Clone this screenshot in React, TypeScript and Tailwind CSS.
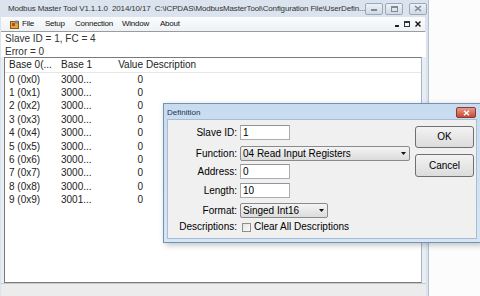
import React from "react";

const rows = [
  { a: "0 (0x0)", b: "3000...", v: "0" },
  { a: "1 (0x1)", b: "3000...", v: "0" },
  { a: "2 (0x2)", b: "3000...", v: "0" },
  { a: "3 (0x3)", b: "3000...", v: "0" },
  { a: "4 (0x4)", b: "3000...", v: "0" },
  { a: "5 (0x5)", b: "3000...", v: "0" },
  { a: "6 (0x6)", b: "3000...", v: "0" },
  { a: "7 (0x7)", b: "3000...", v: "0" },
  { a: "8 (0x8)", b: "3000...", v: "0" },
  { a: "9 (0x9)", b: "3001...", v: "0" },
];

// little application icon used in title and menu bars
const AppIcon = () => (
  <svg width="9" height="9" viewBox="0 0 9 9">
    <rect x="0.5" y="1.5" width="8" height="7" fill="#e0a93a" stroke="#8a5a1a" strokeWidth="1" />
    <rect x="2" y="3" width="3" height="3" fill="#c8432b" />
    <rect x="5" y="0.5" width="3" height="3" fill="#7b8ea6" />
  </svg>
);

const CaptionButton = ({ kind }: { kind: "min" | "max" | "close" }) => (
  <div className="w-[18px] h-[12px] rounded-[2px] border border-[#9aa8ba] bg-gradient-to-b from-[#eef2f7] to-[#cfd9e4] flex items-center justify-center">
    {kind === "min" && <div className="w-[6px] h-[2px] mt-[3px] bg-[#7f8a98]" />}
    {kind === "max" && <div className="w-[7px] h-[6px] border border-[#7f8a98] border-t-2" />}
    {kind === "close" && (
      <svg width="8" height="7" viewBox="0 0 8 7">
        <path d="M1 1 L7 6 M7 1 L1 6" stroke="#7f8a98" strokeWidth="1.6" />
      </svg>
    )}
  </div>
);

const TextBox = ({ value, w }: { value: string; w: string }) => (
  <div className={`${w} h-[15px] bg-white border border-[#abadb3] border-t-[#8f959c] flex items-center px-[2px] text-[10px] leading-none`}>
    {value}
  </div>
);

const DropDown = ({ value, w }: { value: string; w: string }) => (
  <div className={`${w} h-[15px] rounded-[2px] border border-[#8a8a8a] bg-gradient-to-b from-[#f4f4f4] to-[#dcdcdc] flex items-center pl-[2px] pr-[3px] text-[10px] leading-none`}>
    <span className="flex-1">{value}</span>
    <svg width="5" height="3" viewBox="0 0 5 3">
      <path d="M0 0 L5 0 L2.5 3 Z" fill="#111" />
    </svg>
  </div>
);

const Field = ({ label, children, mt }: { label: string; children: React.ReactNode; mt: string }) => (
  <div className={`flex items-center ${mt}`}>
    <div className="w-[72px] text-right text-[10px] leading-none pr-[3px]">{label}</div>
    {children}
  </div>
);

export default function App() {
  return (
    <div className="w-[480px] h-[296px] bg-[#fcfcfc] relative overflow-hidden font-['Liberation_Sans',Arial,sans-serif] text-black">
      {/* main window */}
      <div className="w-[429px] h-full flex flex-col bg-[#dbe4ee] border-r border-[#b3c1d0]">
        {/* title bar */}
        <div className="h-[17px] flex items-center pl-[5px] pr-[3px]">
          <AppIcon />
          <span className="ml-[3px] text-[8px] tracking-[-0.15px] text-[#333] whitespace-nowrap">
            Modbus Master Tool V1.1.1.0&nbsp;&nbsp;2014/10/17&nbsp;&nbsp;C:\ICPDAS\ModbusMasterTool\Configuration File\UserDefin...
          </span>
          <div className="ml-auto flex gap-[2px]">
            <CaptionButton kind="min" />
            <CaptionButton kind="max" />
            <div className="w-[2px]" />
            <CaptionButton kind="close" />
          </div>
        </div>

        {/* menu bar */}
        <div className="h-[14px] ml-px mr-[3px] flex items-center bg-gradient-to-b from-[#fbfcfd] to-[#eef1f5] text-[8px] tracking-[-0.25px] text-[#111]">
          <div className="ml-[9px] mr-[3px]">
            <AppIcon />
          </div>
          <span className="w-[23px]">File</span>
          <span className="w-[30px]">Setup</span>
          <span className="w-[47px]">Connection</span>
          <span className="w-[38px]">Window</span>
          <span>About</span>
          <div className="ml-auto flex items-center gap-[5px] pr-[4px] text-[#111]">
            <div className="w-[4px] h-[2px] bg-[#222] mt-[3px]" />
            <div className="w-[6px] h-[6px] border border-[#333] border-t-2" />
            <svg width="6" height="6" viewBox="0 0 6 6">
              <path d="M0.5 0.5 L5.5 5.5 M5.5 0.5 L0.5 5.5" stroke="#111" strokeWidth="1.4" />
            </svg>
          </div>
        </div>
        <div className="h-px ml-px mr-[3px] bg-[#9c9c9c]" />

        {/* status output */}
        <div className="h-[25px] ml-px mr-[2px] bg-white pl-[4px] pt-px text-[10px] leading-[12.5px] text-[#333]">
          <div>Slave ID = 1, FC = 4</div>
          <div>Error = 0</div>
        </div>

        {/* register list child window */}
        <div className="flex-1 ml-px mr-[2px] bg-[#e9eef4] flex flex-col">
          <div className="flex-1 ml-[3px] mr-[4px] bg-white border border-[#7a7a7a] border-r-[#a8b4c2] flex flex-col text-[10px] leading-none text-[#222]">
            <div className="h-[15px] flex items-center border-b border-[#e6e6e6]">
              <span className="w-[52px] pl-[4px]">Base 0(...</span>
              <span className="w-[50px] pl-[4px]">Base 1</span>
              <span className="w-[36px] text-right">Value</span>
              <span className="pl-[3px]">Description</span>
            </div>
            {rows.map((r) => (
              <div key={r.a} className="h-[13.4px] flex items-center">
                <span className="w-[52px] pl-[4px]">{r.a}</span>
                <span className="w-[50px] pl-[4px]">{r.b}</span>
                <span className="w-[36px] text-right">{r.v}</span>
              </div>
            ))}
          </div>
          <div className="h-[13px] border-t border-[#c9c9c9] bg-[#ececec]" />
        </div>
      </div>

      {/* Definition dialog */}
      <div className="absolute left-[163px] top-[103px] w-[318px] h-[140px] border border-[#6f93b5] bg-gradient-to-b from-[#c9dcef] to-[#d7e6f4] flex flex-col shadow-[2px_2px_6px_rgba(0,0,0,0.25)]">
        <div className="h-[15px] flex items-center pl-[3px] pr-[4px]">
          <span className="text-[8px] text-[#1e3250] mt-[2px]">Definition</span>
          <div className="ml-auto mt-[2px] w-[20px] h-[11px] rounded-[2px] border border-[#8d3a30] bg-gradient-to-b from-[#e79a8c] to-[#c44a36] flex items-center justify-center">
            <svg width="7" height="6" viewBox="0 0 7 6">
              <path d="M1 0.8 L6 5.2 M6 0.8 L1 5.2" stroke="#fff" strokeWidth="1.5" />
            </svg>
          </div>
        </div>
        <div className="flex-1 mx-[3px] mb-[3px] bg-[#f0f0f0] border border-[#a7bdd3] flex">
          <div className="flex flex-col pt-[5px]">
            <Field label="Slave ID:" mt="mt-0">
              <TextBox value="1" w="w-[50px]" />
            </Field>
            <Field label="Function:" mt="mt-[6px]">
              <DropDown value="04 Read Input Registers" w="w-[170px]" />
            </Field>
            <Field label="Address:" mt="mt-[3px]">
              <TextBox value="0" w="w-[50px]" />
            </Field>
            <Field label="Length:" mt="mt-[4px]">
              <TextBox value="10" w="w-[50px]" />
            </Field>
            <Field label="Format:" mt="mt-[5px]">
              <DropDown value="Singed Int16" w="w-[88px]" />
            </Field>
            <Field label="Descriptions:" mt="mt-[4px]">
              <div className="flex items-center ml-[2px]">
                <div className="w-[9px] h-[9px] border border-[#8f8f8f] bg-gradient-to-br from-[#e4e4e4] to-[#fafafa]" />
                <span className="ml-[3px] text-[10px] leading-none">Clear All Descriptions</span>
              </div>
            </Field>
          </div>
          <div className="ml-auto mr-[2px] pt-[6px] flex flex-col gap-[6px]">
            <button className="w-[59px] h-[22px] rounded-[3px] border border-[#707070] bg-gradient-to-b from-[#f3f3f3] to-[#dcdcdc] text-[10px] leading-none">
              OK
            </button>
            <button className="w-[59px] h-[23px] rounded-[3px] border border-[#707070] bg-gradient-to-b from-[#f3f3f3] to-[#dcdcdc] text-[10px] leading-none">
              Cancel
            </button>
          </div>
        </div>
      </div>
    </div>
  );
}
